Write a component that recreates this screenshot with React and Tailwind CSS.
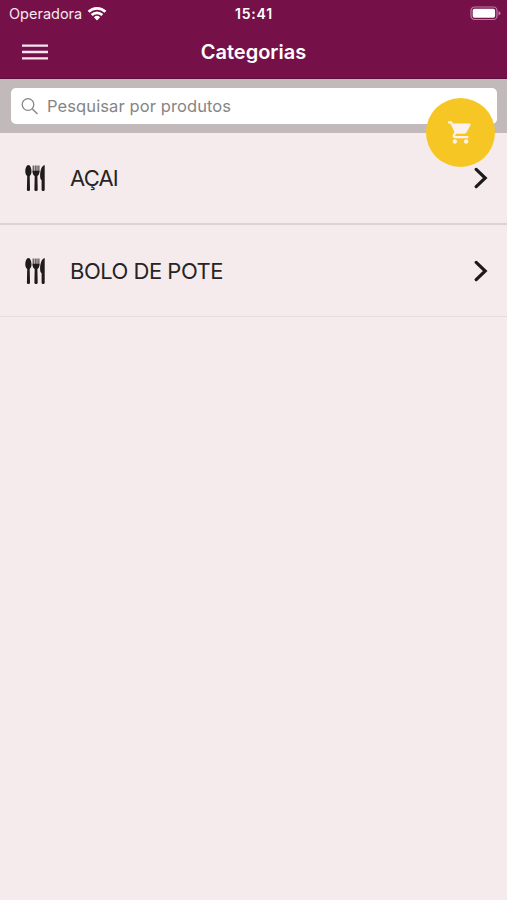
function Wifi() {
  return (
    <svg className="ml-[5px] h-[15px] w-[20px]" viewBox="0 0 20 15" fill="none" stroke="#fff" strokeWidth="2.7">
      <path d="M1.600 5.800a12 12 0 0 1 16.800 0" />
      <path d="M4.700 9a7.600 7.600 0 0 1 10.600 0" />
      <path d="M10 14.400 6.900 11.300a4.500 4.500 0 0 1 6.200 0z" fill="#fff" stroke="none" />
    </svg>
  );
}

function Battery() {
  return (
    <svg className="h-[15px] w-[31px]" viewBox="0 0 31 15">
      <rect x="1" y="1" width="26" height="12.5" rx="3.6" fill="none" stroke="#bd7fa4" strokeWidth="1.2" />
      <rect x="2.7" y="2.7" width="22.4" height="9.1" rx="1.8" fill="#fff" />
      <path d="M28.5 5v4.6q2-.8 2-2.3t-2-2.3z" fill="#bd7fa4" />
    </svg>
  );
}

function Cutlery() {
  return (
    <svg className="h-[28px] w-[22px] shrink-0" viewBox="0 0 22 28" fill="#1f1a1b">
      <path d="M4.400 1C6.300 1 7.500 4.200 7.500 7.400c0 2.200-.8 3.800-1.800 4.500l.3 13.900c0 1.600-3.100 1.600-3.100 0l.3-13.900c-1.100-.7-1.900-2.300-1.900-4.500C1.300 4.200 2.500 1 4.400 1z" />
      <path d="M9.200 1.500v7M11.200 1.500v7M13 1.500v7M14.900 1.500v7" fill="none" stroke="#1f1a1b" strokeWidth=".9" />
      <path d="M8.600 6.800h6.800c.1 3-.6 4.600-2 5.200l.3 13.800c0 1.600-3.300 1.600-3.300 0l.3-13.800c-1.500-.6-2.200-2.200-2.100-5.200z" />
      <path d="M20.700 1v24.800c0 1.600-3.100 1.600-3.100 0v-9.500c-1.200-.8-1.500-2.300-1.500-4.600 0-4.800 1.500-10.200 4.600-10.700z" />
    </svg>
  );
}

function Chevron() {
  return (
    <svg className="h-[22px] w-[15px] shrink-0" viewBox="0 0 15 22" fill="none" stroke="#1d191a" strokeWidth="3.200" strokeLinecap="round">
      <path d="m2.200 2.400 9 8.600-9 8.600" />
    </svg>
  );
}

function Row({ label, tracking, className }) {
  return (
    <li className={"flex items-center pl-[24px] pr-[18px] " + className}>
      <Cutlery />
      <span className={"ml-[24px] flex-1 text-[22px] leading-7 text-[#282324] " + tracking}>{label}</span>
      <Chevron />
    </li>
  );
}

export default function App() {
  return (
    <div className="relative h-[900px] w-full overflow-hidden bg-[#f5ebec] font-['Inter',sans-serif]">
      <header className="h-[79px] border-b border-[#5d103b] bg-[#751148] text-white">
        <div className="grid h-[27px] grid-cols-3 items-center pl-[9px] pr-[6px]">
          <div className="flex items-center text-[14.500px] text-[#f7e8f0]">
            <span>Operadora</span>
            <Wifi />
          </div>
          <span className="-ml-[2px] text-center text-[14px] font-semibold tracking-[0.800px]">15:41</span>
          <div className="flex justify-end"><Battery /></div>
        </div>
        <div className="grid h-[50px] grid-cols-[80px_1fr_80px] items-center">
          <button aria-label="Menu" className="ml-[22px] w-[26px]">
            <svg className="block h-[18px] w-[26px]" viewBox="0 0 26 18" stroke="#f8e5ef" strokeWidth="2.300">
              <path d="M0 2.600h26M0 9h26M0 15.400h26" />
            </svg>
          </button>
          <h1 className="text-center text-[20px] font-semibold">Categorias</h1>
        </div>
      </header>
      <div className="h-[54px] bg-[#c1b9ba] pl-[11px] pr-[10px] pt-[9px]">
        <div className="flex h-[36px] items-center rounded-[5px] bg-white pl-[10px]">
          <svg className="h-[18px] w-[18px]" viewBox="0 0 18 18" fill="none" stroke="#858585" strokeWidth="1.300">
            <circle cx="7" cy="7.500" r="5.800" />
            <path d="m11.200 11.700 5.300 5.300" />
          </svg>
          <span className="ml-[8px] text-[16.500px] tracking-[0.100px] text-[#858585]">Pesquisar por produtos</span>
        </div>
      </div>
      <ul>
        <Row label="AÇAI" tracking="tracking-[-0.800px]" className="h-[92px] border-b-2 border-[#ddd3d5]" />
        <Row label="BOLO DE POTE" tracking="tracking-[-0.500px]" className="h-[92px] border-b border-[#e6dcde]" />
      </ul>
      <button aria-label="Carrinho" className="absolute left-[426px] top-[98px] flex h-[69px] w-[69px] items-center justify-center rounded-full bg-[#f6c624]">
        <svg className="h-[27px] w-[27px]" viewBox="0 0 24 24" fill="#fdf1ed">
          <path d="M7 18c-1.100 0-1.990.9-1.990 2S5.900 22 7 22s2-.9 2-2-.9-2-2-2zM1 2v2h2l3.600 7.590-1.350 2.450c-.16.280-.25.610-.25.960 0 1.100.9 2 2 2h12v-2H7.420c-.14 0-.25-.11-.25-.25l.03-.12.900-1.630h7.450c.75 0 1.410-.41 1.750-1.030l3.580-6.490c.08-.14.120-.31.120-.48 0-.55-.45-1-1-1H5.210l-.94-2H1zm16 16c-1.100 0-1.990.9-1.990 2s.89 2 1.990 2 2-.9 2-2-.9-2-2-2z" />
        </svg>
      </button>
    </div>
  );
}
